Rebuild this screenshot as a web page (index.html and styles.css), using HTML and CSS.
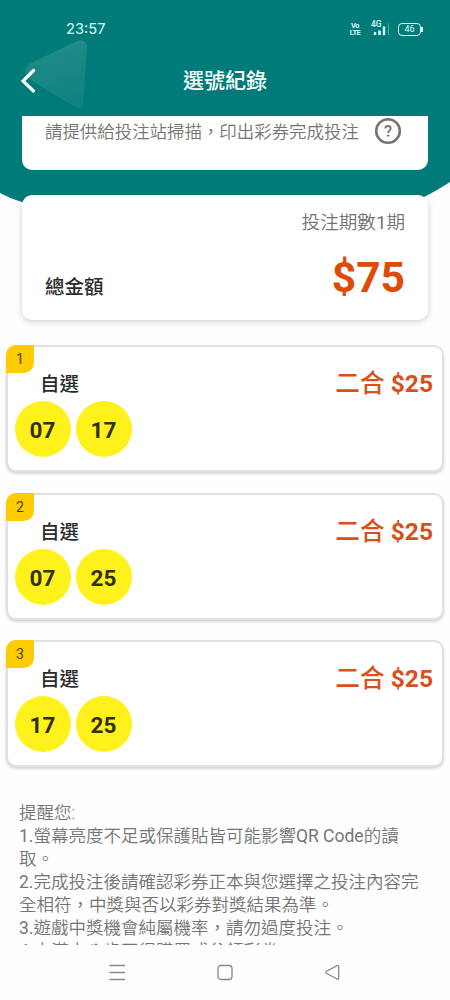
FILE: index.html
```html
<!DOCTYPE html>
<html lang="zh-Hant">
<head>
<meta charset="utf-8">
<title>選號紀錄</title>
<link rel="stylesheet" href="styles.css">
</head>
<body>
<div class="screen">
  <svg class="backdrop" width="450" height="230" viewBox="0 0 450 230">
    <path d="M0 0H450V182Q436 191 426 196Q390 214 340 222H90Q40 211 22 202Q9 198 0 193Z" fill="#007b79"/>
    <defs><linearGradient id="fade" x1="0" y1="0" x2=".3" y2="1"><stop offset="0" stop-color="#258d8b"/><stop offset="1" stop-color="#108381"/></linearGradient></defs>
    <path d="M29 64L77 41Q87 38 87 48L83 104Q82 111 75 107L29 79Q22 71 29 64Z" fill="url(#fade)"/>
  </svg>
  <header class="header">
    <div class="status">
      <span class="clock">23:57</span>
      <div class="indicators">
        <span class="volte"><span>Vo</span><span>LTE</span></span>
        <span class="signal">
          <span class="network">4G</span>
          <svg width="18" height="16" viewBox="0 0 18 16"><path d="M4 14v-3M8.500 14V9.500M13 14V5.500" stroke="#d8fffb" stroke-width="2.400" fill="none"/><path d="M17.500 14V2" stroke="#4aaaa6" stroke-width="1"/></svg>
        </span>
        <span class="battery">46</span>
      </div>
    </div>
    <div class="titlebar">
      <svg class="back" width="16" height="26" viewBox="0 0 16 26"><path d="M13.500 2.500L3 13L13.500 23" fill="none" stroke="#fff" stroke-width="3.200" stroke-linecap="round"/></svg>
      <h1 class="title">選號紀錄</h1>
    </div>
  </header>
  <main class="content">
    <section class="scan">
      <span>請提供給投注站掃描，印出彩券完成投注</span>
      <svg class="help" width="28" height="28" viewBox="0 0 28 28"><circle cx="14" cy="14" r="11.800" fill="none" stroke="#757575" stroke-width="2.600"/><path d="M11.300 11.500Q11.300 9 14 9T16.700 11.400C16.700 13.400 14.100 13.600 14.100 16" fill="none" stroke="#757575" stroke-width="1.800"/><circle cx="14.100" cy="18.600" r="1.200" fill="#757575"/></svg>
    </section>
    <section class="summary">
      <div class="period">投注期數<span class="latin">1</span>期</div>
      <div class="total"><span class="total-label">總金額</span><span class="total-value">$75</span></div>
    </section>
    <section class="tickets">
      <article class="ticket">
        <span class="index">1</span>
        <div class="ticket-head"><span class="kind">自選</span><span class="price">二合 <b>$25</b></span></div>
        <div class="balls"><span class="ball">07</span><span class="ball">17</span></div>
      </article>
      <article class="ticket">
        <span class="index">2</span>
        <div class="ticket-head"><span class="kind">自選</span><span class="price">二合 <b>$25</b></span></div>
        <div class="balls"><span class="ball">07</span><span class="ball">25</span></div>
      </article>
      <article class="ticket">
        <span class="index">3</span>
        <div class="ticket-head"><span class="kind">自選</span><span class="price">二合 <b>$25</b></span></div>
        <div class="balls"><span class="ball">17</span><span class="ball">25</span></div>
      </article>
    </section>
    <section class="notes">
      <p>提醒您:</p>
      <p><span class="latin">1.</span>螢幕亮度不足或保護貼皆可能影響<span class="latin">QR Code</span>的讀<br>取。</p>
      <p><span class="latin">2.</span>完成投注後請確認彩券正本與您選擇之投注內容完<br>全相符，中獎與否以彩券對獎結果為準。</p>
      <p><span class="latin">3.</span>遊戲中獎機會純屬機率，請勿過度投注。</p>
      <p><span class="latin">4.</span>未滿十八歲不得購買或兌領彩券。</p>
    </section>
  </main>
  <nav class="navbar">
    <svg width="18" height="18" viewBox="0 0 18 18"><path d="M1.500 2.500H17M1.500 9.500H17M1.500 16.500H17"/></svg>
    <svg width="18" height="18" viewBox="0 0 18 18"><rect x="2" y="2.500" width="14" height="14" rx="3"/></svg>
    <svg width="18" height="18" viewBox="0 0 18 18"><path d="M2.500 8.300L13 2.700Q14.700 2.200 14.700 4V15Q14.700 16.800 13 16L2.500 10.300Q1.200 9.300 2.500 8.300Z"/></svg>
  </nav>
</div>
</body>
</html>
```
FILE: styles.css
```css
* { box-sizing: border-box; }
body {
  margin: 0;
  background: #fefefe;
  font-family: Roboto, "Noto Sans CJK TC", sans-serif;
  color: #2b2b2b;
}
.screen {
  position: relative;
  display: flex;
  flex-direction: column;
  width: 450px;
  height: 1000px;
  overflow: hidden;
}
.latin { font-weight: 400; }
.backdrop { position: absolute; top: 0; left: 0; }
.header {
  position: relative;
  flex: none;
  height: 116px;
  color: #fff;
}
.status {
  display: flex;
  justify-content: space-between;
  align-items: center;
  height: 58px;
  padding: 0 29px 0 66px;
}
.clock {
  font-family: Inter, sans-serif;
  font-size: 14.7px;
  color: #d8fffb;
}
.indicators {
  display: flex;
  align-items: center;
  color: #d8fffb;
}
.volte {
  display: flex;
  flex-direction: column;
  align-items: center;
  width: 10px;
  font-size: 7.5px;
  font-weight: 700;
  letter-spacing: -.5px;
  line-height: 7px;
}
.signal {
  display: flex;
  position: relative;
  width: 19px;
  margin-left: 11px;
}
.network {
  position: absolute;
  top: -1px;
  left: 0;
  font-size: 8.5px;
  font-weight: 500;
  line-height: 9px;
}
.battery {
  position: relative;
  width: 23px;
  height: 13px;
  margin-left: 8px;
  border: 1.5px solid #d8fffb;
  border-radius: 4px;
  font-size: 9px;
  line-height: 11px;
  text-align: center;
}
.battery::after {
  content: "";
  position: absolute;
  right: -3px;
  top: 3px;
  width: 2px;
  height: 5px;
  background: #d8fffb;
}
.titlebar {
  display: grid;
  grid-template-columns: 20px 1fr 20px;
  align-items: center;
  height: 46px;
  padding: 0 20px;
}
.title {
  margin: 0;
  font-size: 21px;
  font-weight: 500;
  line-height: 46px;
  text-align: center;
}
.content {
  position: relative;
  flex: none;
  height: 829px;
  overflow: hidden;
}
.scan {
  display: flex;
  justify-content: space-between;
  height: 54px;
  margin: 0 22px;
  padding: 1px 26px 0 23px;
  border-radius: 0 0 10px 10px;
  background: #fff;
  color: #757575;
  font-size: 17.45px;
  font-weight: 350;
  line-height: 31px;
  white-space: nowrap;
}
.help { flex: none; }
.summary {
  height: 125px;
  margin: 25px 22px 0;
  padding: 15px 23px 0;
  border-radius: 10px;
  background: #fff;
  box-shadow: 0 2px 6px rgba(0, 0, 0, .18);
}
.period {
  color: #757575;
  font-size: 18.6px;
  font-weight: 350;
  line-height: 26px;
  text-align: right;
}
.total {
  display: flex;
  justify-content: space-between;
  align-items: center;
  height: 58px;
  margin-top: 13px;
}
.total-label { padding-top: 14px; font-size: 19.5px; font-weight: 500; }
.total-value { color: #de4b07; font-size: 42.5px; font-weight: 700; line-height: 58px; }
.tickets {
  display: flex;
  flex-direction: column;
  gap: 20.5px;
  padding: 25px 6px 0;
}
.ticket {
  position: relative;
  height: 127px;
  padding: 22px 9px 0 6.5px;
  border: 2px solid #e1e1e1;
  border-radius: 10px;
  background: #fff;
  box-shadow: 0 2px 3px rgba(0, 0, 0, .16);
}
.index {
  position: absolute;
  top: -2px;
  left: -2px;
  width: 28px;
  height: 28px;
  border-radius: 10px 0 10px 0;
  background: #ffcc02;
  color: #4a3c08;
  font-size: 14px;
  line-height: 29px;
  text-align: center;
}
.ticket-head {
  display: flex;
  justify-content: space-between;
  height: 32px;
  padding-left: 25.5px;
  line-height: 32px;
}
.kind { font-size: 19.5px; font-weight: 500; }
.price { color: #d9501a; font-size: 24.6px; font-weight: 500; line-height: 29px; white-space: nowrap; }
.price b { font-weight: 700; }
.balls { display: flex; gap: 5px; }
.ball {
  width: 56px;
  height: 56px;
  border-radius: 50%;
  background: #fff11b;
  color: #33300f;
  font-size: 22.5px;
  font-weight: 700;
  line-height: 58px;
  text-align: center;
}
.notes {
  padding: 34.5px 0 0 19px;
  color: #757575;
  font-size: 17.5px;
  font-weight: 350;
  line-height: 23px;
  white-space: nowrap;
}
.notes p { margin: 0; }
.navbar {
  display: flex;
  justify-content: center;
  gap: 90px;
  padding-top: 18px;
  fill: none;
  stroke: #888;
  stroke-width: 1.3;
}
```
